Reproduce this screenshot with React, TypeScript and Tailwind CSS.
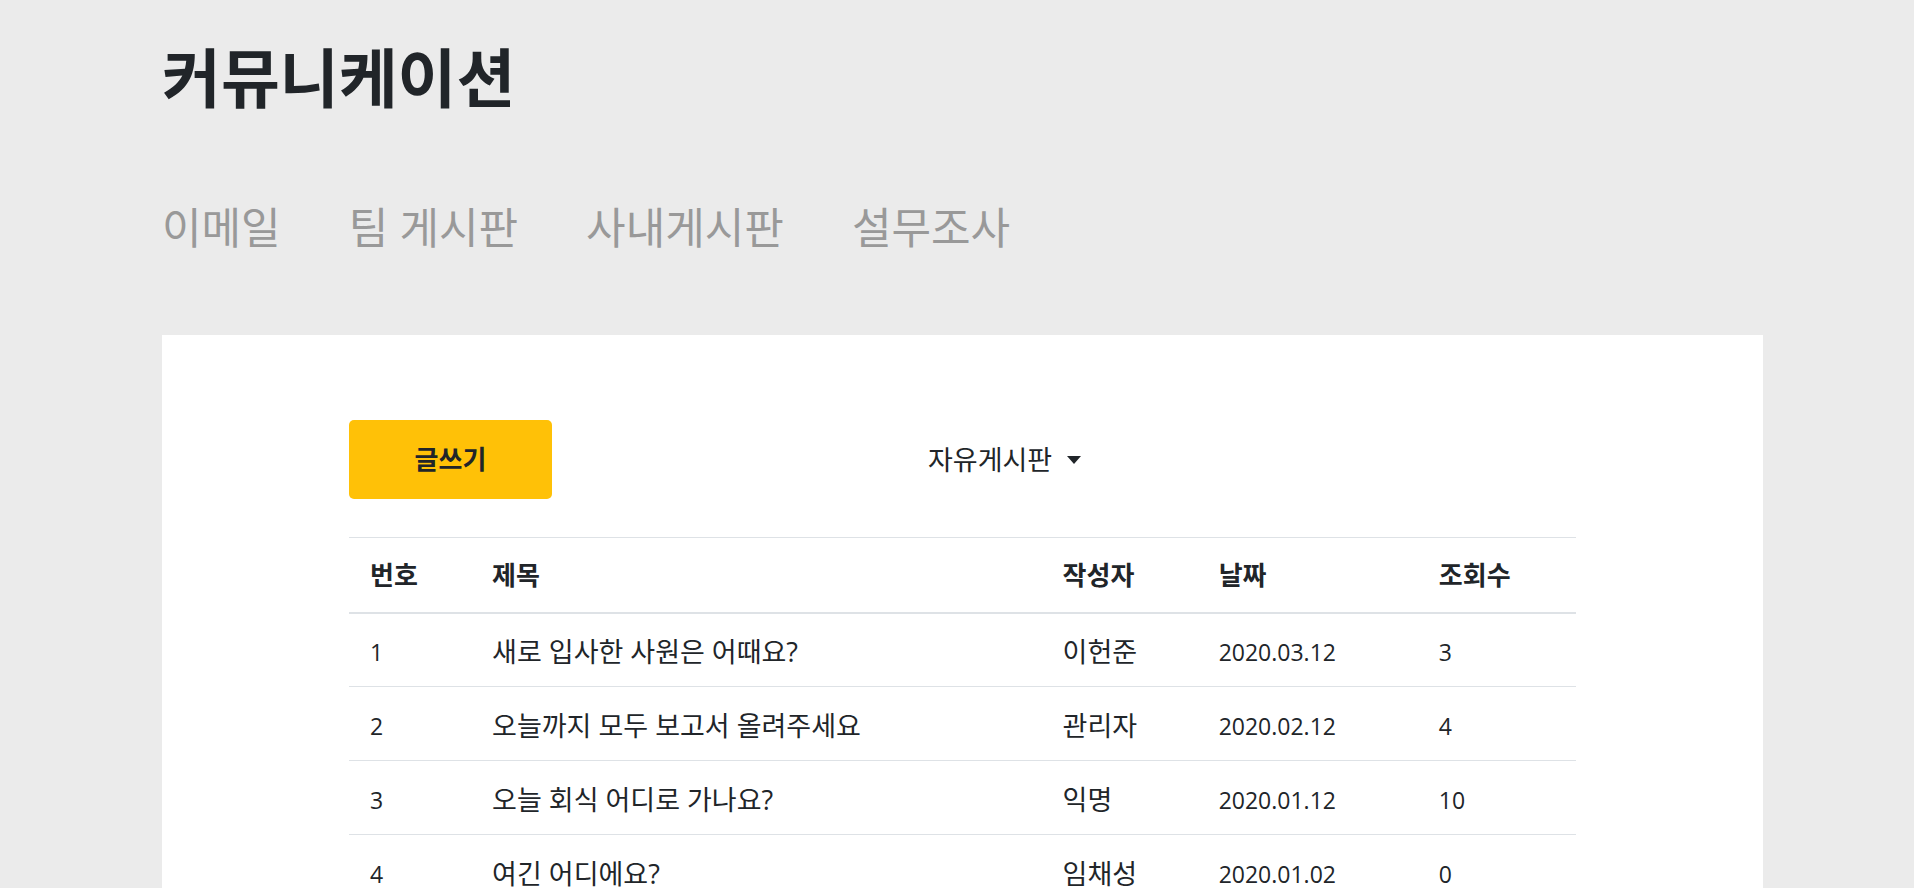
const posts = [
  { id: 1, title: "새로 입사한 사원은 어때요?", author: "이헌준", date: "2020.03.12", views: 3 },
  { id: 2, title: "오늘까지 모두 보고서 올려주세요", author: "관리자", date: "2020.02.12", views: 4 },
  { id: 3, title: "오늘 회식 어디로 가나요?", author: "익명", date: "2020.01.12", views: 10 },
  { id: 4, title: "여긴 어디에요?", author: "임채성", date: "2020.01.02", views: 0 },
];

const tabs = ["이메일", "팀 게시판", "사내게시판", "설무조사"];

const App = () => {
  return (
    <div
      className="min-h-[1583px] bg-[#ebebeb] pl-[162px] pt-[45px] pb-[98px] text-[#212529]"
      style={{ fontFamily: '"Open Sans", "Noto Sans CJK KR", sans-serif' }}
    >
      <h1 className="text-[64px] leading-[65px] font-bold">커뮤니케이션</h1>

      {/* 상단 탭 */}
      <nav className="mt-[96px] flex gap-[68px] text-[43px] leading-[43px] text-[#999999]">
        {tabs.map((tab) => (
          <a key={tab} className="cursor-pointer">
            {tab}
          </a>
        ))}
      </nav>

      <div className="mt-[86px] w-[1601px] min-h-[1150px] bg-white px-[187px] pt-[85px]">
        <div className="flex items-center">
          <button className="w-[203px] h-[79px] rounded-[5px] bg-[#ffc107] text-[26px] font-bold text-[#212529]">
            글쓰기
          </button>
          <div className="ml-[376px] flex items-center text-[27px] leading-[36px] cursor-pointer">
            자유게시판
            <span className="ml-[15px] inline-block w-0 h-0 border-x-[7px] border-x-transparent border-t-[8px] border-t-[#212529]"></span>
          </div>
        </div>

        <table className="mt-[38px] w-full table-fixed text-[27px] leading-[36px]">
          <colgroup>
            <col className="w-[122px]" />
            <col className="w-[570px]" />
            <col className="w-[156px]" />
            <col className="w-[220px]" />
            <col className="w-[158px]" />
          </colgroup>
          <thead>
            <tr className="border-t border-[#dee2e6]">
              {["번호", "제목", "작성자", "날짜", "조회수"].map((h) => (
                <th
                  key={h}
                  className="h-[75px] pl-[21px] text-left text-[26px] font-bold border-b-2 border-[#dee2e6]"
                >
                  {h}
                </th>
              ))}
            </tr>
          </thead>
          <tbody>
            {posts.map((post) => (
              <tr key={post.id} className="border-b border-[#dee2e6]">
                <td className="h-[74px] pl-[21px] pt-1 text-[23px]">{post.id}</td>
                <td className="pl-[21px] pt-1">{post.title}</td>
                <td className="pl-[21px] pt-1">{post.author}</td>
                <td className="pl-[21px] pt-1 text-[23px]">{post.date}</td>
                <td className="pl-[21px] pt-1 text-[23px]">{post.views}</td>
              </tr>
            ))}
          </tbody>
        </table>
      </div>
    </div>
  );
};

export default App;
